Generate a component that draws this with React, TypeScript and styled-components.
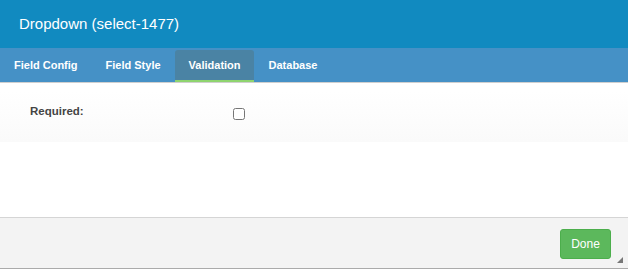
import React from 'react'
import styled, { createGlobalStyle } from 'styled-components'

const GlobalStyle = createGlobalStyle`
    html, body {
        margin: 0;
        padding: 0;
        background: #ffffff;
    }
    body {
        font-family: "Liberation Sans", Arial, sans-serif;
    }
`

const tabs = ['Field Config', 'Field Style', 'Validation', 'Database']

export default function App() {
    return (
        <>
            <GlobalStyle />
            <Dialog>
                <TitleBar>Dropdown (select-1477)</TitleBar>
                <TabBar>
                    {tabs.map((t) => (
                        <Tab key={t} $active={t === 'Validation'}>
                            {t}
                        </Tab>
                    ))}
                </TabBar>
                <Body>
                    <FieldRow>
                        <Label>Required:</Label>
                        <Checkbox type="checkbox" />
                    </FieldRow>
                </Body>
                <Footer>
                    <DoneButton>Done</DoneButton>
                    <ResizeGrip viewBox="0 0 6 6">
                        <path d="M6 0 L6 6 L0 6 Z" fill="#777" />
                    </ResizeGrip>
                </Footer>
            </Dialog>
        </>
    )
}

const Dialog = styled.div`
    width: 628px;
    height: 269px;
    display: flex;
    flex-direction: column;
    background: #ffffff;
    border-bottom: 1px solid #aaaaaa;
    box-sizing: border-box;
`

const TitleBar = styled.div`
    height: 48px;
    display: flex;
    align-items: center;
    padding: 0 0 1px 19px;
    box-sizing: border-box;
    background: #118ac0;
    color: #ffffff;
    font-size: 15px;
`

const TabBar = styled.div`
    height: 35px;
    display: flex;
    align-items: flex-end;
    box-sizing: border-box;
    background: #4591c6;
    border-bottom: 1px solid #cfcfcf;
`

const Tab = styled.div<{ $active?: boolean }>`
    height: 32px;
    padding: 0 13px 1px 14px;
    margin-right: 1px;
    display: flex;
    align-items: center;
    box-sizing: border-box;
    color: #ffffff;
    font-size: 11px;
    font-weight: bold;
    border-radius: 3px 3px 0 0;
    background: ${(p) => (p.$active ? '#4a83a4' : 'transparent')};
    border-bottom: 2px solid ${(p) => (p.$active ? '#8fd46f' : 'transparent')};
`

const Body = styled.div`
    flex: 1;
    padding-top: 8px;
`

const FieldRow = styled.div`
    height: 51px;
    display: flex;
    align-items: center;
    padding: 0 0 6px 30px;
    box-sizing: border-box;
    background: linear-gradient(#ffffff, #fafafa);
`

const Label = styled.label`
    width: 203px;
    color: #444444;
    font-size: 11.5px;
    font-weight: bold;
    margin-top: -6px;
`

const Checkbox = styled.input`
    width: 12px;
    height: 12px;
    margin: 0;
`

const Footer = styled.div`
    height: 51px;
    display: flex;
    align-items: center;
    justify-content: flex-end;
    padding: 0 17px 1px 0;
    box-sizing: border-box;
    position: relative;
    background: #f3f3f3;
    border-top: 1px solid #d5d5d5;
`

const DoneButton = styled.button`
    width: 51px;
    height: 30px;
    padding: 0;
    margin-top: 2px;
    border: 1px solid #4cae4c;
    border-radius: 3px;
    background: #5cb85c;
    color: #ffffff;
    font-family: "Liberation Sans", Arial, sans-serif;
    font-size: 12px;
`

const ResizeGrip = styled.svg`
    position: absolute;
    right: 5px;
    bottom: 5px;
    width: 6px;
    height: 6px;
`
